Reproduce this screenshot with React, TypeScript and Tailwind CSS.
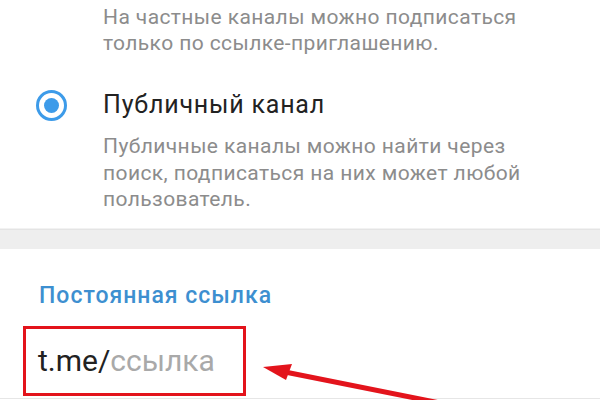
import React from "react";

const RadioOn: React.FC = () => (
  <div className="flex h-[31px] w-[31px] items-center justify-center rounded-full border-[3px] border-[#3d9be9]">
    <div className="h-[15px] w-[15px] rounded-full bg-[#3d9be9]" />
  </div>
);

const Arrow: React.FC = () => (
  <svg className="absolute left-0 top-0" width="600" height="400" viewBox="0 0 600 400">
    <line x1="285" y1="372" x2="440" y2="403" stroke="#e3141c" strokeWidth="5" strokeLinecap="round" />
    <polygon points="263,367 292,364 286,380" fill="#e3141c" />
  </svg>
);

export default function App() {
  return (
    <div className="relative h-[400px] w-[600px] overflow-hidden bg-white font-['Roboto',sans-serif]">
      {/* privacy options */}
      <div className="h-[229px] border-b border-[#f2f2f2] pt-[4px]">
        <p className="pl-[103px] text-[21px] leading-[26px] tracking-[0.4px] text-[#8c8c8c]">
          На частные каналы можно подписаться
          <br />
          только по ссылке-приглашению.
        </p>

        <div className="mt-[36px] flex h-[26px] items-center">
          <div className="ml-[36px] mr-[36px]">
            <RadioOn />
          </div>
          <span className="text-[25px] leading-[26px] tracking-[0.8px] text-[#222]">Публичный канал</span>
        </div>

        <p className="mt-[15px] pl-[103px] text-[21px] leading-[26.5px] tracking-[0.4px] text-[#8c8c8c]">
          Публичные каналы можно найти через
          <br />
          поиск, подписаться на них может любой
          <br />
          пользователь.
        </p>
      </div>

      <div className="h-[20px] border-t border-[#e4e4e4] bg-[#eeeeee]" />

      {/* permanent link */}
      <div className="pt-[35px]">
        <h3 className="pl-[39px] text-[23px] font-medium leading-[24px] tracking-[1px] text-[#3d8fd0]">
          Постоянная ссылка
        </h3>
        <div className="ml-[23px] mt-[18px] flex h-[70px] w-[223px] items-center border-[3px] border-[#e3131b] pl-[12px]">
          <span className="text-[30px] leading-[30px] text-[#222]">t.me/</span>
          <span className="text-[30px] leading-[30px] text-[#a9a9a9]">ссылка</span>
        </div>
        <div className="mt-[2px] h-px bg-[#e6e6e6]" />
      </div>

      <Arrow />
    </div>
  );
}
